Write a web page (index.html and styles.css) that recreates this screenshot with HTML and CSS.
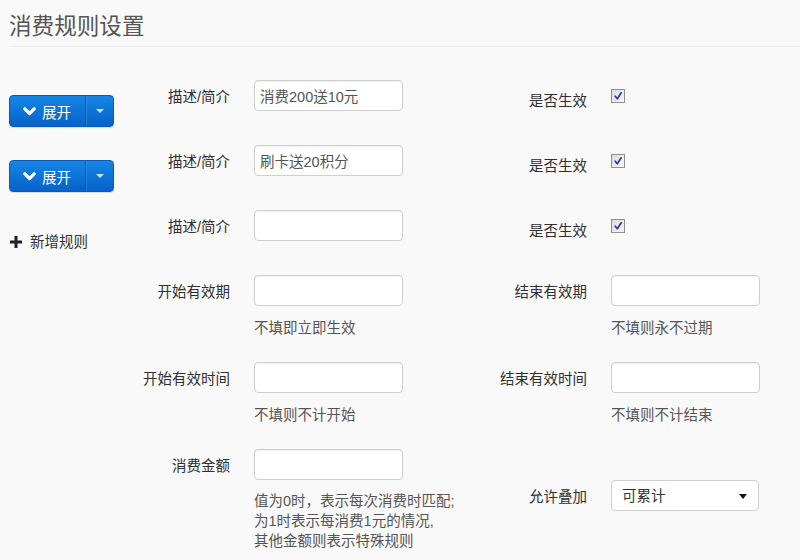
FILE: index.html
```html
<!DOCTYPE html>
<html lang="zh-CN">
<head>
<meta charset="utf-8">
<title>消费规则设置</title>
<link rel="stylesheet" href="styles.css">
</head>
<body>
<div class="page">
  <h1 class="title">消费规则设置</h1>
  <div class="content">
    <aside class="sidebar">
      <div class="btn-group">
        <button class="btn btn-main" type="button">
          <svg class="chev" viewBox="0 0 13 9" width="13" height="9"><path d="M1.8 1.8 L6.5 6.5 L11.2 1.8" fill="none" stroke="#fff" stroke-width="3.2" stroke-linecap="round" stroke-linejoin="round"/></svg>
          <span>展开</span>
        </button>
        <button class="btn btn-caret" type="button"><span class="caret"></span></button>
      </div>
      <div class="btn-group">
        <button class="btn btn-main" type="button">
          <svg class="chev" viewBox="0 0 13 9" width="13" height="9"><path d="M1.8 1.8 L6.5 6.5 L11.2 1.8" fill="none" stroke="#fff" stroke-width="3.2" stroke-linecap="round" stroke-linejoin="round"/></svg>
          <span>展开</span>
        </button>
        <button class="btn btn-caret" type="button"><span class="caret"></span></button>
      </div>
      <a class="add-rule" href="#">
        <svg class="plus" viewBox="0 0 12 12" width="12" height="12"><path d="M6 0 V12 M0 6 H12" stroke="#222" stroke-width="3"/></svg>
        <span>新增规则</span>
      </a>
    </aside>

    <form class="form">
      <div class="row">
        <label class="label">描述/简介</label>
        <div class="control"><input class="input" type="text" value="消费200送10元"></div>
        <label class="label label-check">是否生效</label>
        <div class="control"><span class="check"><svg viewBox="0 0 10 10" width="10" height="10"><path d="M2.2 5.2 L4.3 7.8 L8.2 1.8" fill="none" stroke="#2c3d9e" stroke-width="1.7" stroke-linecap="round" stroke-linejoin="round"/></svg></span></div>
      </div>
      <div class="row">
        <label class="label">描述/简介</label>
        <div class="control"><input class="input" type="text" value="刷卡送20积分"></div>
        <label class="label label-check">是否生效</label>
        <div class="control"><span class="check"><svg viewBox="0 0 10 10" width="10" height="10"><path d="M2.2 5.2 L4.3 7.8 L8.2 1.8" fill="none" stroke="#2c3d9e" stroke-width="1.7" stroke-linecap="round" stroke-linejoin="round"/></svg></span></div>
      </div>
      <div class="row">
        <label class="label">描述/简介</label>
        <div class="control"><input class="input" type="text" value=""></div>
        <label class="label label-check">是否生效</label>
        <div class="control"><span class="check"><svg viewBox="0 0 10 10" width="10" height="10"><path d="M2.2 5.2 L4.3 7.8 L8.2 1.8" fill="none" stroke="#2c3d9e" stroke-width="1.7" stroke-linecap="round" stroke-linejoin="round"/></svg></span></div>
      </div>
      <div class="row row-help">
        <label class="label">开始有效期</label>
        <div class="control"><input class="input" type="text" value=""><p class="help">不填即立即生效</p></div>
        <label class="label">结束有效期</label>
        <div class="control"><input class="input" type="text" value=""><p class="help">不填则永不过期</p></div>
      </div>
      <div class="row row-help">
        <label class="label">开始有效时间</label>
        <div class="control"><input class="input" type="text" value=""><p class="help">不填则不计开始</p></div>
        <label class="label">结束有效时间</label>
        <div class="control"><input class="input" type="text" value=""><p class="help">不填则不计结束</p></div>
      </div>
      <div class="row row-last">
        <label class="label">消费金额</label>
        <div class="control"><input class="input" type="text" value=""><p class="help help-multi">值为0时，表示每次消费时匹配;<br>为1时表示每消费1元的情况,<br>其他金额则表示特殊规则</p></div>
        <label class="label shifted">允许叠加</label>
        <div class="control shifted">
          <div class="select-wrap">
            <select class="select"><option>可累计</option></select>
            <span class="select-caret"></span>
          </div>
        </div>
      </div>
    </form>
  </div>
</div>
</body>
</html>
```

FILE: styles.css
```css
html, body {
  margin: 0;
  padding: 0;
  background: #f9f9f9;
}

body {
  font-family: "Liberation Sans", "Noto Sans CJK SC", sans-serif;
  font-size: 14.5px;
  color: #333;
  width: 800px;
  height: 560px;
  overflow: hidden;
}

.page {
  padding-left: 9px;
}

.title {
  margin: 0;
  padding: 11px 0 3px 0;
  font-size: 22.6px;
  line-height: 32px;
  font-weight: normal;
  color: #555;
  border-bottom: 1px solid #ebebeb;
}

.content {
  display: flex;
  align-items: flex-start;
}

.sidebar {
  width: 121px;
  flex: none;
  padding-top: 48px;
  display: flex;
  flex-direction: column;
  align-items: flex-start;
}

.btn-group {
  display: flex;
  height: 32px;
  margin-bottom: 33px;
  border-radius: 4px;
  border: 1px solid #0a59b3;
  box-sizing: border-box;
  overflow: hidden;
  background: linear-gradient(#1686e6, #0562c8);
  box-shadow: 0 1px 1px rgba(0, 0, 0, 0.12);
}

.btn-group + .btn-group {
  margin-bottom: 40px;
}

.btn {
  border: 0;
  margin: 0;
  background: transparent;
  color: #fff;
  font-family: inherit;
  font-size: 14.5px;
  display: flex;
  align-items: center;
  cursor: pointer;
  padding: 0;
}

.btn-main {
  width: 76px;
  padding-left: 13px;
  gap: 6px;
  border-right: 1px solid #0b57ad;
}

.chev {
  display: block;
}

.btn-caret {
  width: 27px;
  justify-content: center;
  border-left: 1px solid rgba(255, 255, 255, 0.12);
}

.caret {
  width: 0;
  height: 0;
  border-left: 4px solid transparent;
  border-right: 4px solid transparent;
  border-top: 4px solid rgba(255, 255, 255, 0.8);
}

.add-rule {
  display: flex;
  align-items: center;
  gap: 8px;
  text-decoration: none;
  color: #333;
  line-height: 20px;
  padding-left: 1px;
}

.plus {
  display: block;
}

.form {
  margin: 0;
  padding-top: 33px;
}

.row {
  display: grid;
  grid-template-columns: 100px 149px 160px 149px;
  column-gap: 24px;
  align-items: start;
  margin-bottom: 34px;
}

.row-help {
  margin-bottom: 24px;
}

.label {
  text-align: right;
  line-height: 20px;
  padding-top: 7px;
  color: #2f2f2f;
  white-space: nowrap;
}

.label-check {
  padding-top: 11px;
}

.control {
  display: flex;
  flex-direction: column;
}

.input {
  width: 149px;
  height: 31px;
  box-sizing: border-box;
  border: 1px solid #cfcfcf;
  border-radius: 4px;
  background: #fff;
  box-shadow: inset 0 1px 1px rgba(0, 0, 0, 0.06);
  padding: 0 5px;
  margin: 0;
  font-family: inherit;
  font-size: 14.5px;
  color: #555;
}

.help {
  margin: 12px 0 0 0;
  line-height: 20px;
  color: #555;
  white-space: nowrap;
}

.help-multi {
  margin-top: 11px;
}

.check {
  margin-top: 9px;
  width: 14px;
  height: 14px;
  box-sizing: border-box;
  border: 1px solid #8e8f8f;
  background: linear-gradient(135deg, #dcdcdc, #f7f7f7);
  display: flex;
  align-items: center;
  justify-content: center;
}

.check svg {
  display: block;
}

.shifted {
  margin-top: 31px;
}

.select-wrap {
  position: relative;
  width: 148px;
  height: 31px;
}

.select {
  appearance: none;
  -webkit-appearance: none;
  width: 148px;
  height: 31px;
  box-sizing: border-box;
  border: 1px solid #cfcfcf;
  border-radius: 4px;
  background: #fff;
  padding: 0 10px;
  margin: 0;
  font-family: inherit;
  font-size: 14.5px;
  color: #333;
}

.select-caret {
  position: absolute;
  right: 12px;
  top: 14px;
  width: 0;
  height: 0;
  border-left: 4px solid transparent;
  border-right: 4px solid transparent;
  border-top: 5px solid #111;
}
```
